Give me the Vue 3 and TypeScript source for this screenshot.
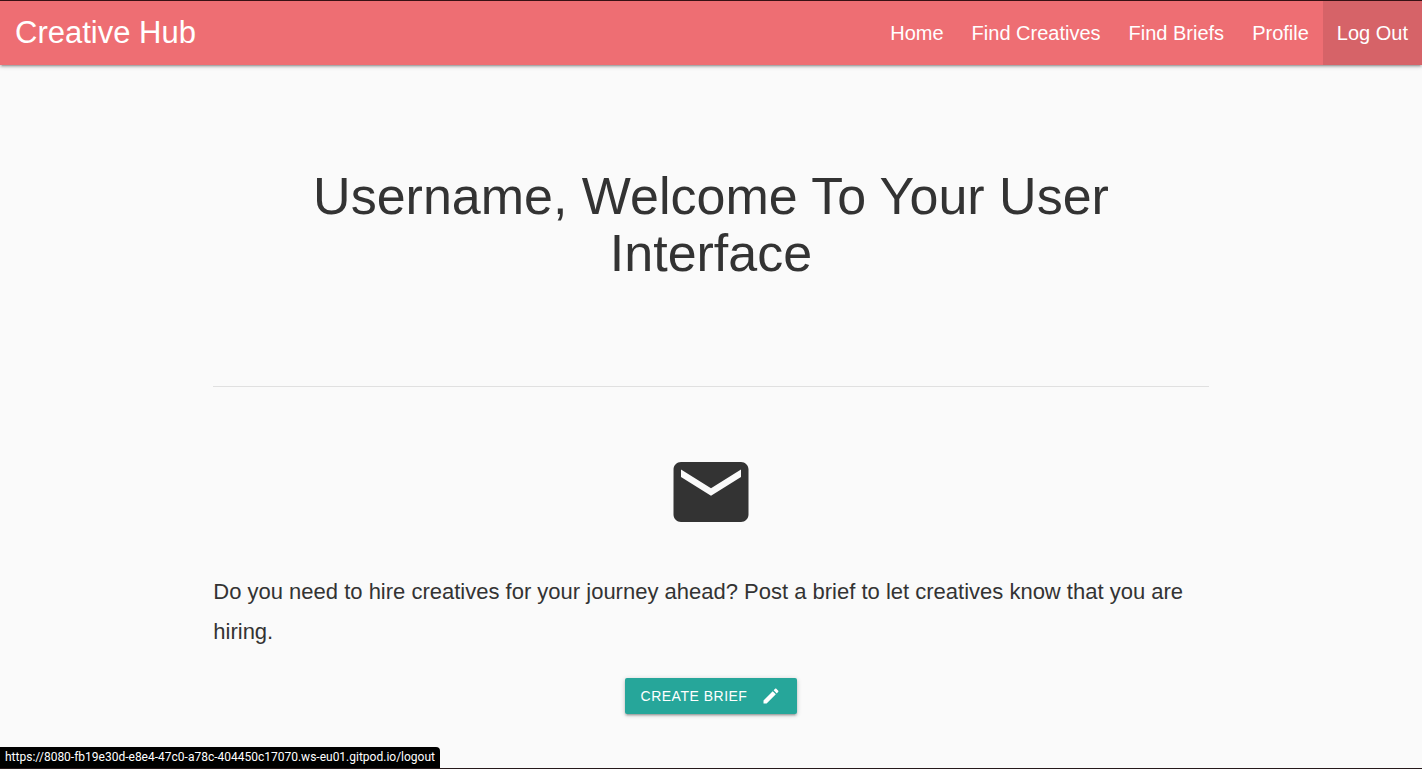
<script setup lang="ts">
interface NavLink {
  label: string
  active?: boolean
}

const links: NavLink[] = [
  { label: 'Home' },
  { label: 'Find Creatives' },
  { label: 'Find Briefs' },
  { label: 'Profile' },
  { label: 'Log Out', active: true },
]
const statusUrl = 'https://8080-fb19e30d-e8e4-47c0-a78c-404450c17070.ws-eu01.gitpod.io/logout'
</script>

<template>
  <div class="page">
    <nav class="navbar">
      <a class="brand" href="#">Creative Hub</a>
      <ul class="links">
        <li v-for="link in links" :key="link.label">
          <a href="#" :class="{ active: link.active }">{{ link.label }}</a>
        </li>
      </ul>
    </nav>
    <main class="container">
      <h1>Username, Welcome To Your User Interface</h1>
      <section class="brief">
        <svg class="mail" viewBox="0 0 24 24" aria-hidden="true">
          <path d="M20 4H4c-1.1 0-1.99.9-1.99 2L2 18c0 1.1.9 2 2 2h16c1.1 0 2-.9 2-2V6c0-1.1-.9-2-2-2zm0 4l-8 5-8-5V6l8 5 8-5v2z" />
        </svg>
        <p>Do you need to hire creatives for your journey ahead? Post a brief to let creatives know that you are hiring.</p>
        <button type="button" class="btn">
          <span>Create Brief</span>
          <svg viewBox="0 0 24 24" aria-hidden="true">
            <path d="M3 17.25V21h3.75L17.81 9.94l-3.75-3.75L3 17.25zM20.71 7.04c.39-.39.39-1.02 0-1.41l-2.34-2.34c-.39-.39-1.02-.39-1.41 0l-1.83 1.83 3.75 3.75 1.83-1.83z" />
          </svg>
        </button>
      </section>
    </main>
    <div class="status">{{ statusUrl }}</div>
  </div>
</template>

<style>
body {
  background: #fafafa;
}
</style>

<style scoped>
.page {
  box-sizing: border-box;
  min-height: 100vh;
  border-top: 1px solid #3c1216;
  border-bottom: 1px solid #26191b;
  background: #fafafa;
  color: #333;
  font-family: "Liberation Sans", Arial, sans-serif;
}
.navbar {
  display: flex;
  justify-content: space-between;
  height: 64px;
  line-height: 64px;
  background: #ee6e73;
  box-shadow: 0 2px 2px 0 rgba(0, 0, 0, 0.14), 0 3px 1px -2px rgba(0, 0, 0, 0.12), 0 1px 5px 0 rgba(0, 0, 0, 0.2);
}
.navbar a {
  display: block;
  color: #fff;
  text-decoration: none;
  white-space: nowrap;
}
.brand {
  padding: 0 15px;
  font-size: 31px;
}
.links {
  display: flex;
  margin: 0;
  padding: 0;
  list-style: none;
}
.links a {
  padding: 0 14px;
  font-size: 20px;
}
.links a.active {
  background: #d66368;
}
.container {
  width: 70%;
  margin: 0 auto;
}
h1 {
  margin: 0;
  padding: 103px 80px 104px;
  border-bottom: 1px solid #e0e0e0;
  font-size: 52px;
  font-weight: 400;
  line-height: 57px;
  text-align: center;
}
.brief {
  display: flex;
  flex-direction: column;
  align-items: center;
  padding: 60px 0 53px;
}
.mail {
  width: 90px;
  height: 90px;
  fill: #333;
}
.brief p {
  margin: 35px 0 26px;
  font-size: 22px;
  line-height: 40px;
}
.btn {
  display: flex;
  align-items: center;
  gap: 14px;
  height: 36px;
  padding: 0 16px;
  border: 0;
  border-radius: 2px;
  background: #26a69a;
  color: #fff;
  font-family: inherit;
  font-size: 14px;
  letter-spacing: 0.5px;
  text-transform: uppercase;
  cursor: pointer;
  box-shadow: 0 2px 2px 0 rgba(0, 0, 0, 0.14), 0 3px 1px -2px rgba(0, 0, 0, 0.12), 0 1px 5px 0 rgba(0, 0, 0, 0.2);
}
.btn svg {
  width: 20px;
  height: 20px;
  fill: #fff;
}
.status {
  position: fixed;
  bottom: 1px;
  left: 0;
  padding: 0 5px;
  border-top-right-radius: 4px;
  background: #000;
  color: #fff;
  font-family: "Segoe UI", Roboto, sans-serif;
  font-size: 12px;
  line-height: 21px;
  white-space: nowrap;
}
</style>
